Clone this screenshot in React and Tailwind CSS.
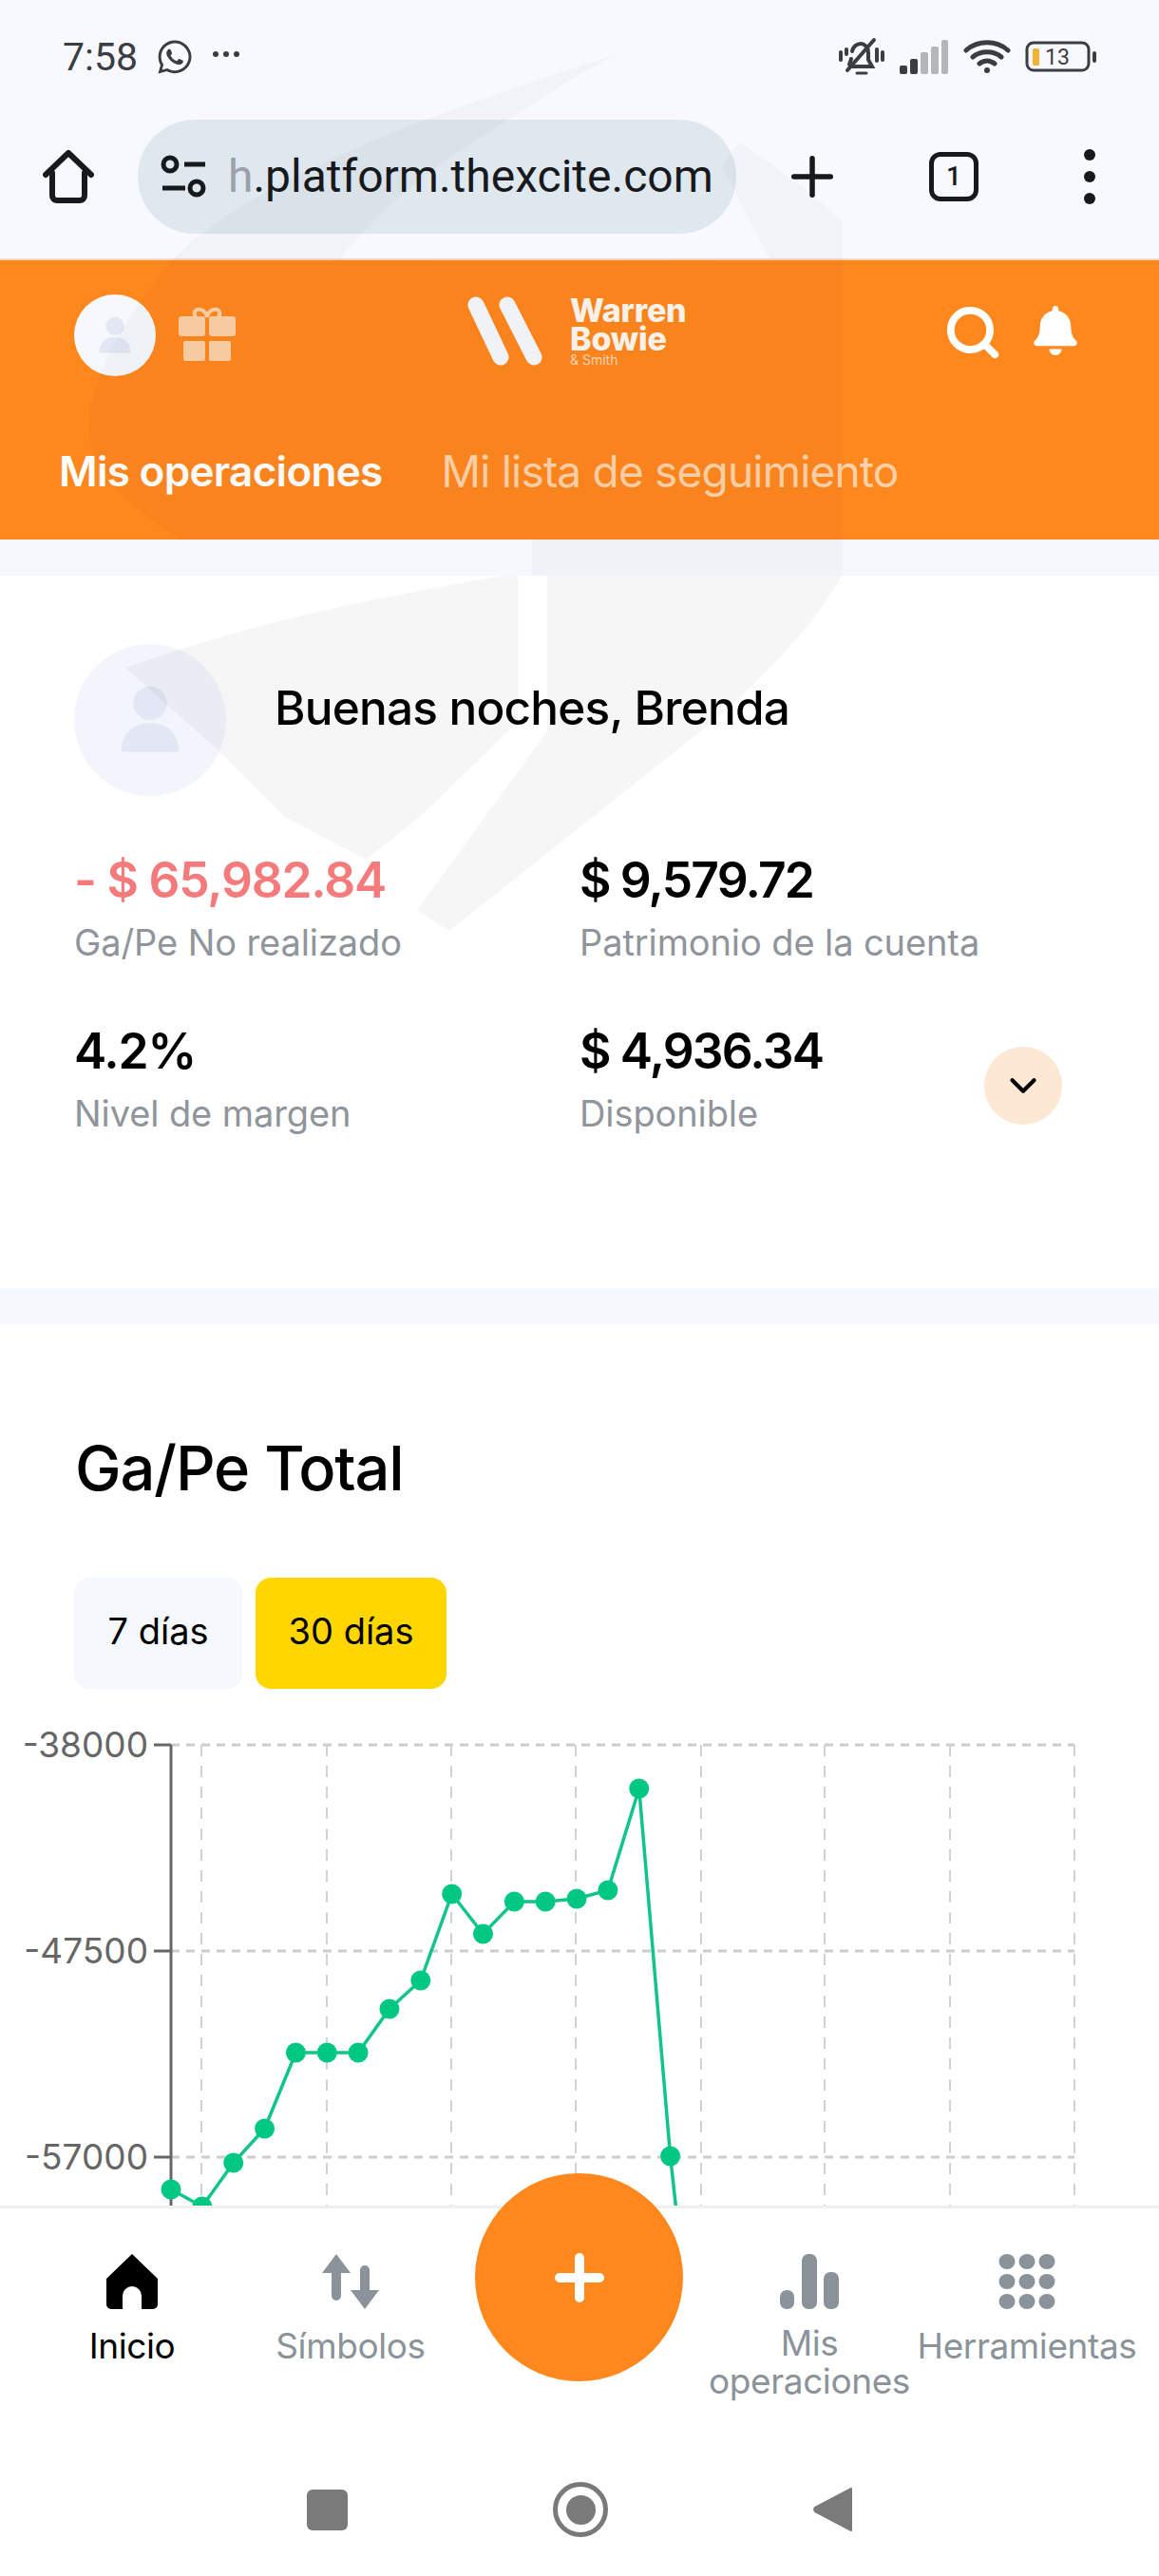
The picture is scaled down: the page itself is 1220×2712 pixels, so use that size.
import React from 'react';
import { Search, ChevronDown, Plus } from 'lucide-react';
import { FaWhatsapp, FaBell } from 'react-icons/fa';

const stats = [
  { value: '- $ 65,982.84', label: 'Ga/Pe No realizado', color: 'text-[#f47a7c]', track: 'tracking-[-1.2px]' },
  { value: '$ 9,579.72', label: 'Patrimonio de la cuenta', color: 'text-black', track: 'tracking-[-1.8px]' },
  { value: '4.2%', label: 'Nivel de margen', color: 'text-black', track: 'tracking-[-1.2px]' },
  { value: '$ 4,936.34', label: 'Disponible', color: 'text-black', track: 'tracking-[-1.8px]' },
];

// Puntos de la gráfica (x cada 32.8px)
const points = [2305, 2323, 2277, 2241, 2161, 2161, 2161, 2115, 2085, 1994, 2036, 2002, 2002, 1999, 1990, 1883, 2270, 2570];
const chartTop = 1800;
const chartPoints = points.map((y, i) => [180 + i * 32.85, y - chartTop]);

const Watermark = () => (
  <svg className="absolute left-0 top-0 pointer-events-none" width="1220" height="1100" viewBox="0 0 1220 1100">
    <path
      fill="#000"
      fillOpacity="0.025"
      d="M650 57 C500 105 270 180 180 275 C130 335 93 400 93 450 C93 490 130 530 190 568 L560 568 L560 606 L887 606 L887 233 C850 200 810 170 778 150 L760 175 L810 272 L358 273 C400 220 450 180 498 150 L607 80Z"
    />
    <g fill="#000" fillOpacity="0.035">
      <path d="M132 703 C280 650 420 625 530 606 L545 606 L545 760 L442 860 L385 905 L300 860 L235 795Z" />
      <path d="M576 606 L886 606 C870 635 850 660 832 680 C800 715 765 750 731 775 L473 980 L439 958 L576 770Z" />
    </g>
  </svg>
);

const ChromeBar = () => (
  <div className="bg-[#f8f9fe]">
    <div className="h-[100px] flex items-center justify-between pl-[66px] pr-[65px] pt-[20px] text-[#3c3d42]">
      <div className="flex items-center">
        <span className="text-[41px] font-['Roboto',sans-serif] leading-none">7:58</span>
        <FaWhatsapp className="ml-[19px] w-[40px] h-[40px]" />
        <span className="ml-[20px] mb-[6px] flex gap-[5px]">
          <i className="w-[6px] h-[6px] rounded-full bg-[#3c3d42]" />
          <i className="w-[6px] h-[6px] rounded-full bg-[#3c3d42]" />
          <i className="w-[6px] h-[6px] rounded-full bg-[#3c3d42]" />
        </span>
      </div>
      <div className="flex items-center gap-[14px]">
        <svg width="52" height="44" viewBox="0 0 50 44" fill="none" stroke="#3c3d42" strokeWidth="4" strokeLinecap="round">
          <path d="M14 32h22l-4-7v-8c0-5-4-9-8-9s-8 3-9 8M14 24l-2 6" />
          <path d="M10 36L38 4" />
          <path d="M3 17v8M47 17v8M41 14v12M9 14v5" />
          <path d="M20 39h10" strokeWidth="3" />
        </svg>
        <svg width="52" height="38" viewBox="0 0 52 38" fill="#3c3d42">
          <rect x="0" y="28" width="8" height="9" rx="2" />
          <rect x="11" y="21" width="8" height="16" rx="2" />
          <rect x="22" y="14" width="8" height="23" rx="2" fill="#b5b6ba" />
          <rect x="33" y="8" width="8" height="29" rx="2" fill="#b5b6ba" />
          <rect x="44" y="1" width="7" height="36" rx="2" fill="#b5b6ba" />
        </svg>
        <svg width="52" height="40" viewBox="0 0 50 40" fill="none" stroke="#3c3d42" strokeWidth="5" strokeLinecap="round">
          <path d="M3 13c12-11 32-11 44 0M10 20c8-7 22-7 30 0M17 27c5-4 11-4 16 0" />
          <circle cx="25" cy="34" r="3" fill="#3c3d42" stroke="none" />
        </svg>
        <svg width="76" height="34" viewBox="0 0 76 34" fill="none">
          <rect x="2" y="2" width="65" height="29" rx="7" stroke="#3c3d42" strokeWidth="3" />
          <rect x="8" y="8" width="7" height="18" rx="1.5" fill="#f2b233" />
          <rect x="71" y="11" width="4" height="12" rx="2" fill="#3c3d42" />
          <text x="21" y="25" fontSize="23" fontFamily="Roboto, sans-serif" fill="#3c3d42">13</text>
        </svg>
      </div>
    </div>
    <div className="h-[172px] flex items-center relative">
      <svg className="ml-[45px]" width="54" height="56" viewBox="0 0 54 56" fill="none" stroke="#17191c" strokeWidth="6" strokeLinejoin="round" strokeLinecap="round">
        <path d="M3 26L27 3l24 23M10 24v24a5 5 0 0 0 5 5h24a5 5 0 0 0 5-5V24" />
      </svg>
      <div className="ml-[46px] w-[630px] h-[120px] rounded-full bg-[#dfe7ef] flex items-center pl-[24px] overflow-hidden">
        <svg width="50" height="48" viewBox="0 0 50 48" fill="none" stroke="#17191c" strokeWidth="5">
          <circle cx="10" cy="11" r="7" />
          <circle cx="38" cy="36" r="7" />
          <path d="M25 11h22M2 36h24" />
        </svg>
        <span className="ml-[21px] text-[48px] leading-none font-['Roboto',sans-serif] text-[#17191c] whitespace-nowrap">
          <span className="text-[#9aa1a8]">h</span>.platform.thexcite.com
        </span>
      </div>
      <Plus className="ml-[47px] text-[#17191c]" size={66} strokeWidth={2} />
      <div className="ml-[90px] w-[52px] h-[52px] rounded-[12px] border-[5px] border-[#17191c] flex items-center justify-center text-[28px] font-medium font-['Roboto',sans-serif] text-[#17191c] leading-none">1</div>
      <div className="ml-[111px] flex flex-col gap-[11px]">
        <i className="w-[12px] h-[12px] rounded-full bg-[#17191c]" />
        <i className="w-[12px] h-[12px] rounded-full bg-[#17191c]" />
        <i className="w-[12px] h-[12px] rounded-full bg-[#17191c]" />
      </div>
    </div>
    <div className="h-[2px] bg-[#f3d9c0]" />
  </div>
);

const UserIcon = ({ className }) => (
  <svg className={className} viewBox="0 0 100 100" fill="#e2e7f3">
    <circle cx="50" cy="28" r="22" />
    <path d="M12 92c0-24 16-38 38-38s38 14 38 38z" />
  </svg>
);

const Header = () => (
  <div className="h-[294px] bg-[#ff881e] text-white">
    <div className="relative h-[180px] flex items-start pt-[36px] pl-[78px] pr-[83px]">
      <div className="w-[86px] h-[86px] rounded-full bg-[#f5f8fd] flex items-center justify-center">
        <UserIcon className="w-[44px] h-[44px]" />
      </div>
      <svg className="ml-[24px] mt-[12px]" width="60" height="60" viewBox="0 0 60 60" fill="#fcd0a6">
        <path d="M18 12c-6-10 10-12 12 0 2-12 18-10 12 0" fill="none" stroke="#fcd0a6" strokeWidth="4" />
        <rect x="0" y="11" width="28" height="21" rx="3" />
        <rect x="32" y="11" width="28" height="21" rx="3" />
        <rect x="5" y="37" width="23" height="21" rx="2" />
        <rect x="32" y="37" width="23" height="21" rx="2" />
      </svg>
      <div className="ml-[243px] flex items-center mt-[2px]">
        <svg width="82" height="74" viewBox="0 0 82 74" stroke="#f5f8fd" strokeWidth="17" strokeLinecap="round">
          <path d="M10 9L36 64M43 9L71 64" />
        </svg>
        <div className="ml-[27px] text-[#fdf7f0] font-extrabold leading-none tracking-[-0.2px]">
          <div className="text-[34px] leading-[30px]">Warren</div>
          <div className="text-[34px] leading-[30px]">Bowie</div>
          <div className="text-[14px] font-normal text-[#fcd9b6] leading-[14px] tracking-normal">&amp; Smith</div>
        </div>
      </div>
      <Search className="ml-auto mt-[9px]" size={62} strokeWidth={3} />
      <FaBell className="ml-[30px] mt-[12px]" size={52} />
    </div>
    <div className="flex items-center pl-[62px] h-[84px] whitespace-nowrap leading-none">
      <span className="text-[44px] font-semibold tracking-[-0.7px]">Mis operaciones</span>
      <span className="ml-[62px] text-[46px] text-[#fdd2aa] tracking-[-0.8px]">Mi lista de seguimiento</span>
    </div>
  </div>
);

const Summary = () => (
  <section className="relative h-[750px] bg-white px-[78px] pt-[72px]">
    <div className="flex items-center">
      <div className="w-[160px] h-[160px] rounded-full bg-[#f2f5fc] flex items-center justify-center">
        <UserIcon className="w-[80px] h-[80px]" />
      </div>
      <h1 className="ml-[51px] mb-[24px] text-[49.5px] font-medium text-black tracking-[-0.8px] leading-none">Buenas noches, Brenda</h1>
    </div>
    <div className="grid grid-cols-[532px_1fr] gap-y-[60px] mt-[57px]">
      {stats.map((s) => (
        <div key={s.label}>
          <div className={`text-[51.5px] leading-[62px] font-semibold ${s.track} ${s.color}`}>{s.value}</div>
          <div className="text-[38px] leading-[46px] text-[#8f959b] mt-[12px] tracking-[-0.1px]">{s.label}</div>
        </div>
      ))}
    </div>
    <div className="absolute left-[1036px] top-[496px] w-[82px] h-[82px] rounded-full bg-[#fde8d4] flex items-center justify-center">
      <ChevronDown className="text-black" size={46} strokeWidth={2.2} />
    </div>
  </section>
);

const Chart = () => {
  const gridY = [37, 254, 471, 688];
  const gridX = [212, 344, 475, 606, 738, 868, 1000, 1131];
  return (
    <svg width="1220" height="900" viewBox="0 0 1220 900" className="block">
      {gridY.map((y) => (
        <line key={y} x1="180" y1={y} x2="1131" y2={y} stroke="#cdcdcd" strokeWidth="3" strokeDasharray="9 7" />
      ))}
      {gridX.map((x) => (
        <line key={x} x1={x} y1="37" x2={x} y2="900" stroke="#d2d2d2" strokeWidth="2" strokeDasharray="12 10" />
      ))}
      <line x1="180" y1="37" x2="180" y2="900" stroke="#666" strokeWidth="3" />
      {[
        ['-38000', 37],
        ['-47500', 254],
        ['-57000', 471],
      ].map(([t, y]) => (
        <g key={t}>
          <line x1="162" y1={y} x2="180" y2={y} stroke="#666" strokeWidth="3" />
          <text x="156" y={y + 13} textAnchor="end" fontSize="37" fontFamily="Inter, sans-serif" fill="#666">{t}</text>
        </g>
      ))}
      <polyline points={chartPoints.map((p) => p.join(',')).join(' ')} fill="none" stroke="#12c48b" strokeWidth="3.5" />
      {chartPoints.map(([x, y]) => (
        <circle key={x} cx={x} cy={y} r="10.5" fill="#00c882" />
      ))}
    </svg>
  );
};

const PnL = () => (
  <section className="bg-white">
    <h2 className="pl-[79px] pt-[119px] text-[65px] leading-[66px] font-medium text-black tracking-[-1.2px]">Ga/Pe Total</h2>
    <div className="flex gap-[14px] pl-[78px] mt-[82px]">
      <button className="w-[177px] h-[117px] pb-[4px] rounded-[16px] bg-[#f5f8fd] text-[38px] text-black">7 días</button>
      <button className="w-[201px] h-[117px] pb-[4px] rounded-[16px] bg-[#ffd600] text-[38px] text-black">30 días</button>
    </div>
    <div className="mt-[22px]">
      <Chart />
    </div>
  </section>
);

const NavItem = ({ width, label, active, labelClass = 'mt-[18px]', children }) => (
  <div className={`flex flex-col items-center ${width} ${active ? 'text-black' : 'text-[#8b939a]'}`}>
    <div className="h-[60px] flex items-center justify-center">{children}</div>
    <div className={`${labelClass} min-h-[40px] text-center text-[37px] leading-[40px] whitespace-pre tracking-[-0.4px]`}>{label}</div>
  </div>
);

const BottomNav = () => (
  <div className="relative h-[390px] bg-white border-t-[3px] border-[#eeeff1] shrink-0">
    <div className="flex pt-[47px]">
      <NavItem width="w-[278px]" label="Inicio" active>
        <svg width="54" height="58" viewBox="0 0 54 58" fill="#000">
          <path d="M27 0L54 26v27a5 5 0 0 1-5 5H37V44a10 10 0 0 0-20 0v14H5a5 5 0 0 1-5-5V26z" />
        </svg>
      </NavItem>
      <NavItem width="w-[182px]" label="Símbolos">
        <svg width="62" height="58" viewBox="0 0 62 58" fill="#8b939a">
          <path d="M16 0l15 20H21v24a5 5 0 0 1-10 0V20H1z" />
          <path d="M46 58L31 38h10V17a5 5 0 0 1 10 0v21h10z" />
        </svg>
      </NavItem>
      <div className="w-[302px]" />
      <NavItem width="w-[180px]" label={'Mis\noperaciones'} labelClass="mt-[15px]">
        <svg width="62" height="58" viewBox="0 0 62 58" fill="#8b939a">
          <rect x="0" y="38" width="15" height="20" rx="7" />
          <rect x="23" y="0" width="16" height="58" rx="7" />
          <rect x="46" y="19" width="16" height="39" rx="7" />
        </svg>
      </NavItem>
      <NavItem width="w-[278px]" label="Herramientas">
        <svg width="60" height="58" viewBox="0 0 60 58" fill="#8b939a">
          {[8, 29, 50].map((cy) =>
            [9, 30, 51].map((cx) => <ellipse key={`${cx}-${cy}`} cx={cx} cy={cy} rx="8.5" ry="8" />)
          )}
        </svg>
      </NavItem>
    </div>
    <div className="absolute left-[500px] top-[-37px] w-[219px] h-[219px] rounded-full bg-[#ff881e] flex items-center justify-center">
      <svg width="52" height="52" viewBox="0 0 52 52" stroke="#fff" strokeWidth="10" strokeLinecap="round">
        <path d="M26 5v42M5 26h42" />
      </svg>
    </div>
    <div className="absolute left-0 right-0 top-[288px] flex items-center">
      <div className="ml-[323px] w-[43px] h-[43px] rounded-[6px] bg-[#7a7a7a]" />
      <div className="ml-[216px] w-[58px] h-[58px] rounded-full border-[5px] border-[#7a7a7a] flex items-center justify-center">
        <div className="w-[31px] h-[31px] rounded-full bg-[#7a7a7a]" />
      </div>
      <svg className="ml-[216px]" width="42" height="50" viewBox="0 0 42 50" fill="#7a7a7a">
        <path d="M40 3v44L2 27a3 3 0 0 1 0-4z" stroke="#7a7a7a" strokeWidth="2" strokeLinejoin="round" />
      </svg>
    </div>
  </div>
);

export default function App() {
  return (
    <div className="relative w-[1220px] h-[2712px] overflow-hidden flex flex-col bg-white font-['Inter',sans-serif]">
      <ChromeBar />
      <Header />
      <div className="flex-1 overflow-hidden">
        <div className="h-[38px] bg-[#f5f8fd]" />
        <Summary />
        <div className="h-[38px] bg-[#f5f8fd]" />
        <PnL />
      </div>
      <Watermark />
      <BottomNav />
    </div>
  );
}
